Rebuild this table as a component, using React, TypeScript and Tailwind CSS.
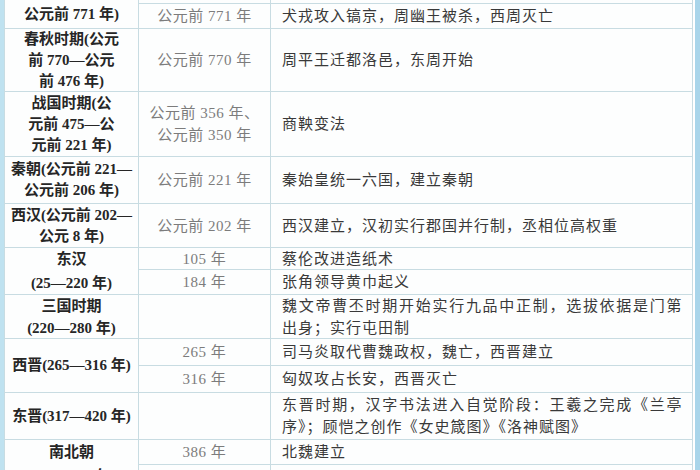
import React from 'react';

// scanned textbook table: era | year | event
const cell = 'bg-[#fdfefe] flex flex-col';
const eraText =
  'items-center justify-center text-center font-bold text-[15px] leading-[21px] text-[#262626] [font-family:"Liberation_Serif","Noto_Sans_CJK_SC",serif]';
const yearText =
  'items-center justify-center text-center text-[15px] leading-[22px] text-[#7c7c7c] tracking-[0.5px] [font-family:"Liberation_Serif","Noto_Sans_CJK_SC",serif]';
const eventText =
  'justify-center pl-[11px] pr-[10px] text-[15px] leading-[22px] text-[#393939] tracking-[1px] [font-family:"Liberation_Serif","Noto_Sans_CJK_SC",serif]';

const Lines: React.FC<{ lines: string[] }> = ({ lines }) => (
  <>
    {lines.map((l, i) => (
      <div key={i} className="whitespace-nowrap">
        {l}
      </div>
    ))}
  </>
);

// first line of a wrapped paragraph is spread to the full cell width
const Wrapped: React.FC<{ first: string; rest: string }> = ({ first, rest }) => (
  <>
    <div className="text-justify tracking-[0.5px] [text-align-last:justify]">{first}</div>
    <div>{rest}</div>
  </>
);

const App: React.FC = () => {
  return (
    <div className="flex h-[470px] w-[700px] overflow-hidden bg-white">
      <div className="w-[4px] bg-[#bfe2f0]" />

      <div className="-mt-[41px] grid w-[689px] grid-cols-[133px_131px_1fr] grid-rows-[44px_24px_62px_64px_46px_43px_21px_24px_43px_26px_26px_46px_24px_40px] gap-px self-start border-x border-[#c8dce2] bg-[#c8dce2]">
        {/* 西周 */}
        <div className={`${cell} ${eraText} row-span-2`}>
          <Lines lines={['西周(公元前', '1046—', '公元前 771 年)']} />
        </div>
        <div className={`${cell} ${yearText} !justify-end`}>公元前 841 年</div>
        <div className={`${cell} ${eventText} !justify-end`}>国人暴动</div>
        <div className={`${cell} ${yearText}`}>公元前 771 年</div>
        <div className={`${cell} ${eventText}`}>犬戎攻入镐京，周幽王被杀，西周灭亡</div>

        {/* 春秋 */}
        <div className={`${cell} ${eraText}`}>
          <Lines lines={['春秋时期(公元', '前 770—公元', '前 476 年)']} />
        </div>
        <div className={`${cell} ${yearText}`}>公元前 770 年</div>
        <div className={`${cell} ${eventText}`}>周平王迁都洛邑，东周开始</div>

        {/* 战国 */}
        <div className={`${cell} ${eraText}`}>
          <Lines lines={['战国时期(公', '元前 475—公', '元前 221 年)']} />
        </div>
        <div className={`${cell} ${yearText}`}>
          <Lines lines={['公元前 356 年、', '公元前 350 年']} />
        </div>
        <div className={`${cell} ${eventText}`}>商鞅变法</div>

        {/* 秦朝 */}
        <div className={`${cell} ${eraText}`}>
          <Lines lines={['秦朝(公元前 221—', '公元前 206 年)']} />
        </div>
        <div className={`${cell} ${yearText}`}>公元前 221 年</div>
        <div className={`${cell} ${eventText}`}>秦始皇统一六国，建立秦朝</div>

        {/* 西汉 */}
        <div className={`${cell} ${eraText}`}>
          <Lines lines={['西汉(公元前 202—', '公元 8 年)']} />
        </div>
        <div className={`${cell} ${yearText}`}>公元前 202 年</div>
        <div className={`${cell} ${eventText}`}>西汉建立，汉初实行郡国并行制，丞相位高权重</div>

        {/* 东汉 */}
        <div className={`${cell} ${eraText} row-span-2 !leading-[24px]`}>
          <Lines lines={['东汉', '(25—220 年)']} />
        </div>
        <div className={`${cell} ${yearText}`}>105 年</div>
        <div className={`${cell} ${eventText}`}>蔡伦改进造纸术</div>
        <div className={`${cell} ${yearText}`}>184 年</div>
        <div className={`${cell} ${eventText}`}>张角领导黄巾起义</div>

        {/* 三国 */}
        <div className={`${cell} ${eraText} !leading-[22px]`}>
          <Lines lines={['三国时期', '(220—280 年)']} />
        </div>
        <div className={`${cell} ${yearText}`} />
        <div className={`${cell} ${eventText}`}>
          <Wrapped first="魏文帝曹丕时期开始实行九品中正制，选拔依据是门第" rest="出身；实行屯田制" />
        </div>

        {/* 西晋 */}
        <div className={`${cell} ${eraText} row-span-2`}>西晋(265—316 年)</div>
        <div className={`${cell} ${yearText}`}>265 年</div>
        <div className={`${cell} ${eventText}`}>司马炎取代曹魏政权，魏亡，西晋建立</div>
        <div className={`${cell} ${yearText}`}>316 年</div>
        <div className={`${cell} ${eventText}`}>匈奴攻占长安，西晋灭亡</div>

        {/* 东晋 */}
        <div className={`${cell} ${eraText}`}>东晋(317—420 年)</div>
        <div className={`${cell} ${yearText}`} />
        <div className={`${cell} ${eventText}`}>
          <Wrapped first="东晋时期，汉字书法进入自觉阶段：王羲之完成《兰亭" rest="序》；顾恺之创作《女史箴图》《洛神赋图》" />
        </div>

        {/* 南北朝 */}
        <div className={`${cell} ${eraText} row-span-2 !justify-start !leading-[24px]`}>
          <Lines lines={['南北朝', '(420—589 年)']} />
        </div>
        <div className={`${cell} ${yearText}`}>386 年</div>
        <div className={`${cell} ${eventText}`}>北魏建立</div>
        <div className={`${cell} ${yearText}`}>494 年</div>
        <div className={`${cell} ${eventText}`}>北魏孝文帝迁都洛阳，进行改革</div>
      </div>

      <div className="w-[2px] bg-white" />
      <div className="w-[5px] bg-[#a9d5ea]" />
    </div>
  );
};

export default App;
